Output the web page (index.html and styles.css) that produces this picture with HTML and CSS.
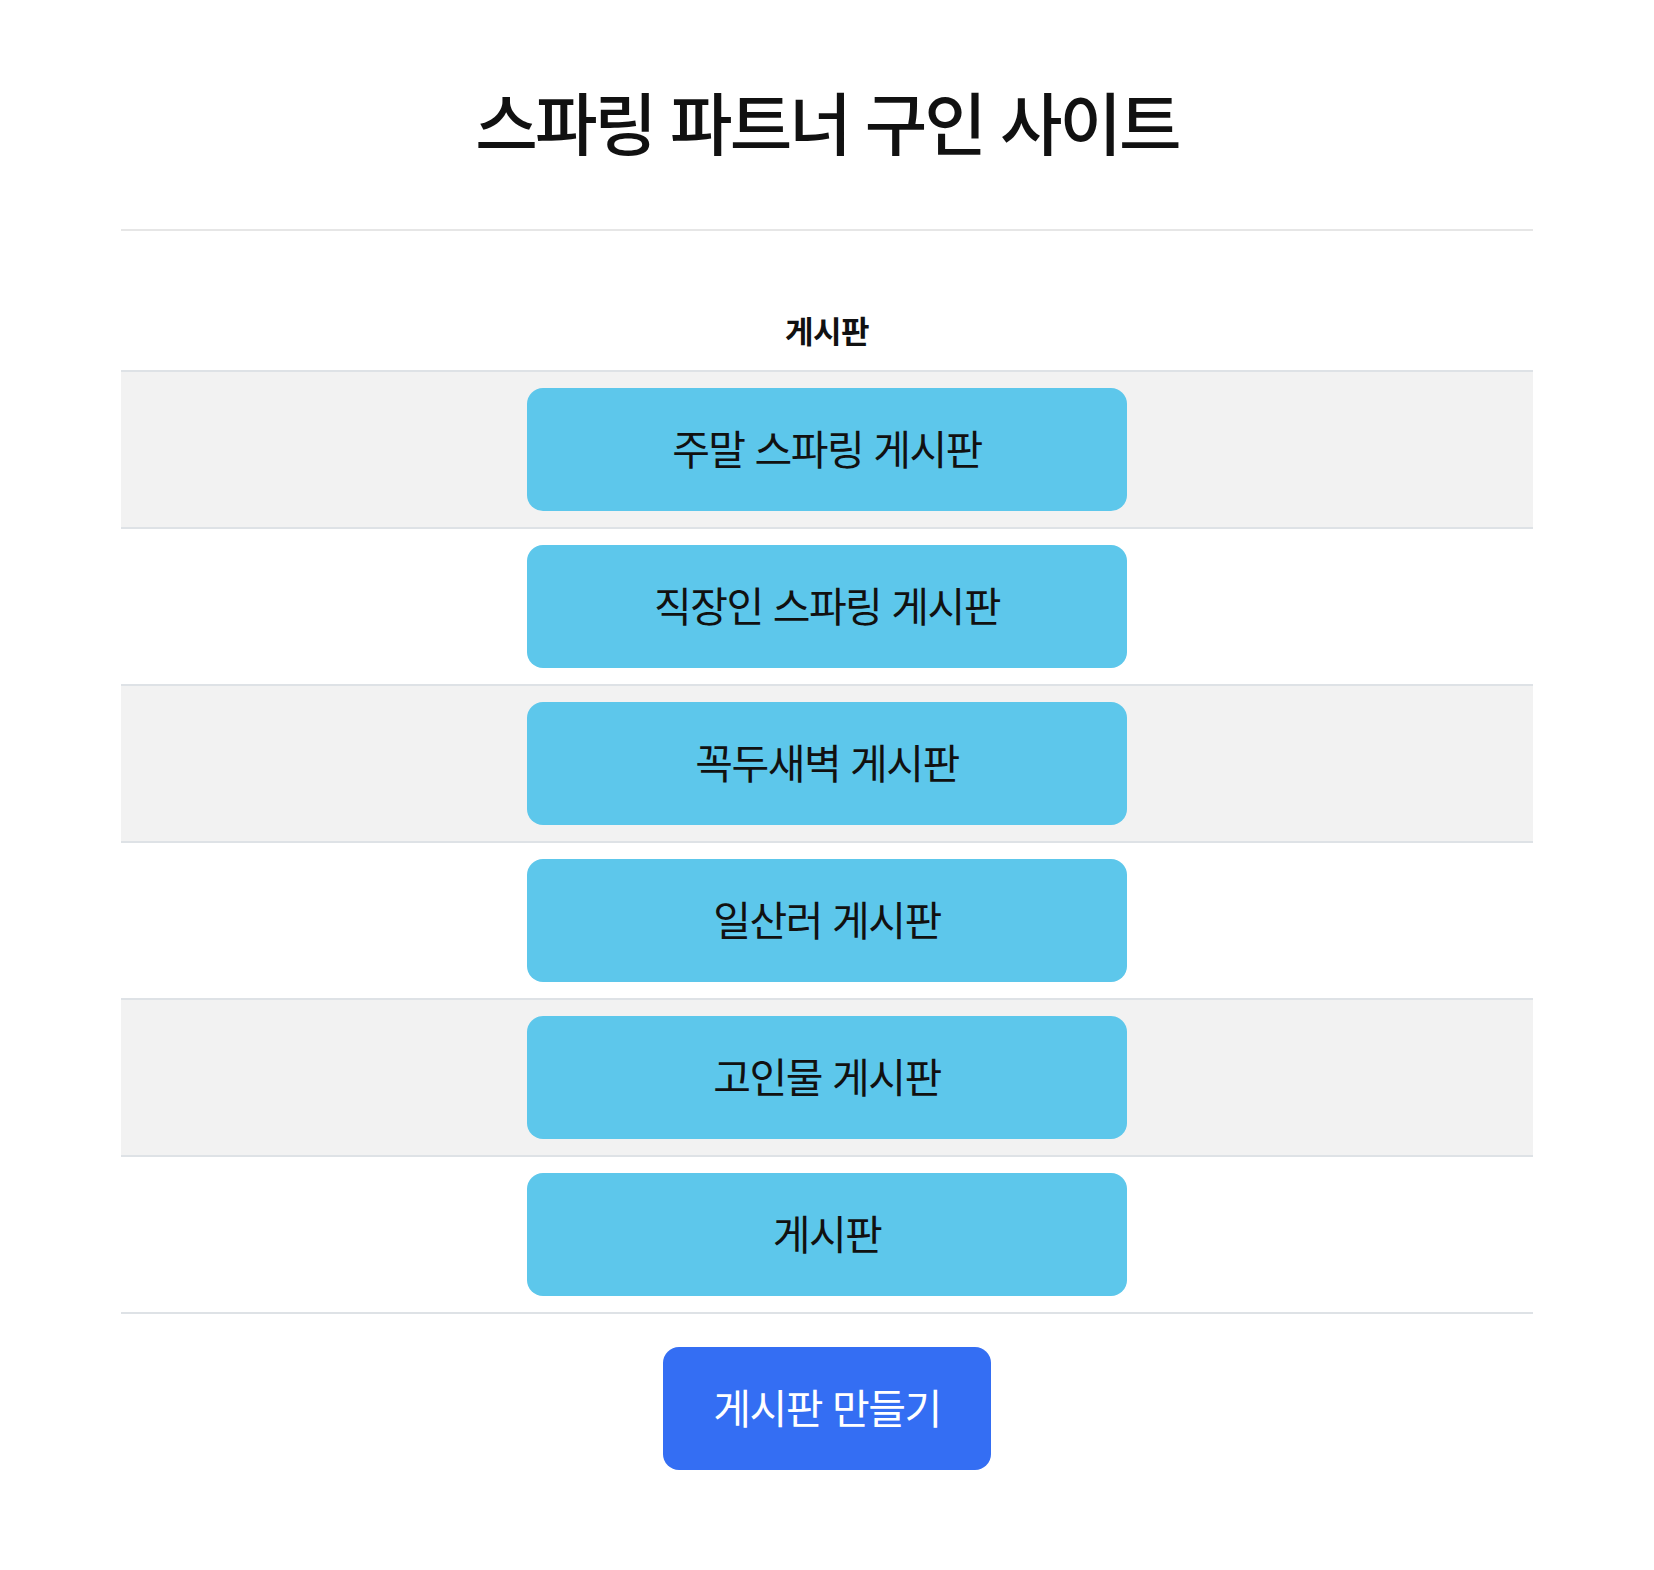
FILE: index.html
```html
<!DOCTYPE html>
<html lang="ko">
<head>
<meta charset="utf-8">
<title>스파링 파트너 구인 사이트</title>
<link rel="stylesheet" href="styles.css">
</head>
<body>
<div class="container">
  <h1 class="title">스파링 파트너 구인 사이트</h1>
  <hr class="divider">
  <table class="board-table">
    <thead>
      <tr><th>게시판</th></tr>
    </thead>
    <tbody>
      <tr class="odd"><td><a class="board-btn" href="#">주말 스파링 게시판</a></td></tr>
      <tr><td><a class="board-btn" href="#">직장인 스파링 게시판</a></td></tr>
      <tr class="odd"><td><a class="board-btn" href="#">꼭두새벽 게시판</a></td></tr>
      <tr><td><a class="board-btn" href="#">일산러 게시판</a></td></tr>
      <tr class="odd"><td><a class="board-btn" href="#">고인물 게시판</a></td></tr>
      <tr class="last"><td><a class="board-btn" href="#">게시판</a></td></tr>
    </tbody>
  </table>
  <div class="actions">
    <a class="create-btn" href="#">게시판 만들기</a>
  </div>
</div>
</body>
</html>
```
FILE: styles.css
```css
html, body {
  margin: 0;
  padding: 0;
  background: #ffffff;
}

body {
  font-family: "Noto Sans CJK KR", "Noto Sans", sans-serif;
  color: #111111;
}

.container {
  width: 1412px;
  margin: 0 auto;
  padding-bottom: 100px;
}

.title {
  margin: 80px 0 0;
  font-size: 68px;
  line-height: 82px;
  font-weight: 500;
  letter-spacing: -3px;
  text-align: center;
  color: #111111;
}

.divider {
  margin: 67px 0 0;
  border: 0;
  border-top: 2px solid #e6e6e6;
  height: 0;
}

.board-table {
  width: 100%;
  margin-top: 58px;
  border-collapse: separate;
  border-spacing: 0;
}

.board-table th {
  padding: 18px 0;
  font-size: 31px;
  line-height: 45px;
  font-weight: 700;
  letter-spacing: -0.5px;
  text-align: center;
  color: #111111;
}

.board-table td {
  padding: 16px 0;
  border-top: 2px solid #dee2e6;
  text-align: center;
}

.board-table tr.odd td {
  background: #f2f2f2;
}

.board-table tr.last td {
  border-bottom: 2px solid #dee2e6;
}

.board-btn {
  display: flex;
  align-items: center;
  justify-content: center;
  box-sizing: border-box;
  width: 600px;
  height: 123px;
  padding-bottom: 5px;
  margin: 0 auto;
  border-radius: 16px;
  background: #5dc7eb;
  color: #111111;
  text-decoration: none;
  font-size: 41px;
  letter-spacing: -1.5px;
  font-weight: 400;
}

.actions {
  display: flex;
  justify-content: center;
  margin-top: 33px;
}

.create-btn {
  display: flex;
  align-items: center;
  justify-content: center;
  box-sizing: border-box;
  width: 328px;
  height: 123px;
  padding-bottom: 5px;
  border-radius: 16px;
  background: #346ef3;
  color: #ffffff;
  text-decoration: none;
  font-size: 41px;
  letter-spacing: -1.5px;
  font-weight: 400;
}
```
